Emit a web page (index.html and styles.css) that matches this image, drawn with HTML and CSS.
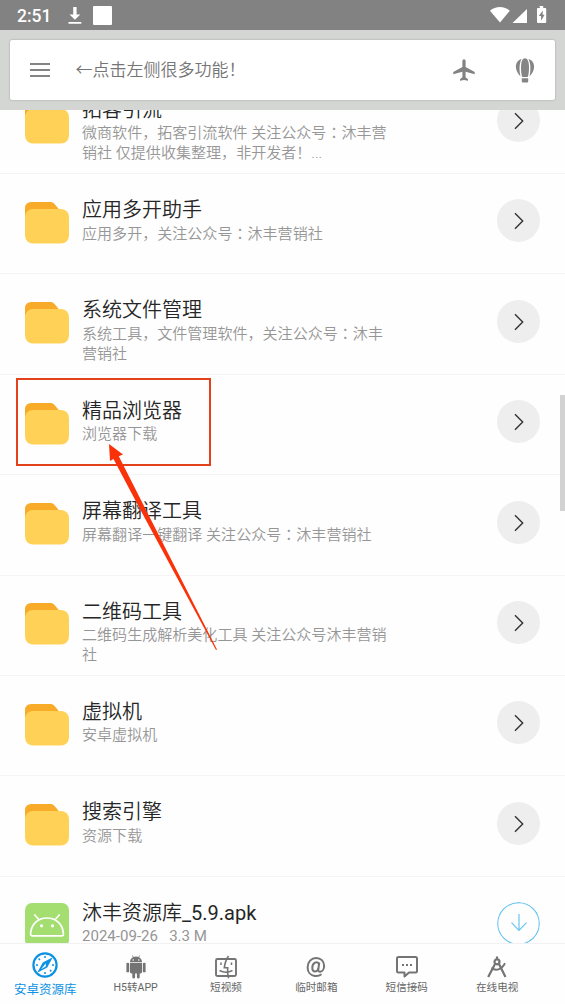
FILE: index.html
```
<!DOCTYPE html>
<html lang="zh-CN">
<head>
<meta charset="utf-8">
<title>安卓资源库</title>
<link rel="stylesheet" href="styles.css">
</head>
<body>
<svg class="defs" width="0" height="0" aria-hidden="true">
  <symbol id="folder" viewBox="0 0 44 44">
    <path fill="#f8ab28" d="M0 24V8.500Q0 2 6.500 2H26Q28 2 29.300 3.800L35 10.500V24Z"/>
    <rect y="9" width="44" height="34.500" rx="8" fill="#ffd257"/>
  </symbol>
  <symbol id="chevron" viewBox="0 0 43 43">
    <path d="M18 14.200L25.700 22L18 29.800" fill="none" stroke="#333" stroke-width="1.400"/>
  </symbol>
</svg>
<div class="screen">
  <header class="top">
    <div class="status">
      <span class="clock">2:51</span>
      <svg class="status-left" width="44" height="20" viewBox="0 0 44 20" fill="#fff">
        <path d="M5.200 1h3.400v7.400h3.700L6.900 13.800 1.500 8.400h3.700zM.5 16h12.800v1.800H.5z"/>
        <rect x="25" width="19" height="19" rx="1"/>
      </svg>
      <svg class="status-right" width="58" height="19" viewBox="0 0 58 19" fill="#fff">
        <path d="M0 4.700C5.600-.3 14.200-.3 19.800 4.700L10 16.600Z"/>
        <path d="M22.500 17L37 3V17Z"/>
        <path d="M49.200 0h4v2h2q1 0 1 1v13q0 1-1 1h-7.200q-1 0-1-1V3q0-1 1-1h2.200z"/>
        <path d="M52.800 4.500L48.800 10h2.300v4.800L54.600 8.700h-2z" fill="#828282"/>
      </svg>
    </div>
    <div class="toolbar">
      <svg class="menu" width="20" height="14" viewBox="0 0 20 14" fill="#848484"><path d="M0 0h20v2H0zM0 6h20v2H0zM0 12h20v2H0z"/></svg>
      <div class="hint">←点击左侧很多功能！</div>
      <svg class="plane" width="22" height="22" viewBox="0 0 22 22" fill="#828282">
        <path d="M9.400 2Q9.400.2 11 .2T12.600 2V7.900L21.700 13V15.200L12.600 12.700V18.300L15 20.200V21.800L11 20.900 7 21.800V20.200L9.400 18.300V12.700L.3 15.200V13L9.400 7.900Z"/>
      </svg>
      <svg class="balloon" width="20" height="25" viewBox="0 0 20 25" fill="#858585">
        <path d="M10 .2C12.800.2 14 4 14 9.800 14 14 13.300 18.800 12.500 19H7.500C6.700 18.800 6 14 6 9.800 6 4 7.200.2 10 .2Z"/>
        <path d="M6.500.9C2.500 2 .8 5.500.9 9c.1 3.700 2.300 7 4.600 9.400C4.300 13 3.900 6 6.500.9ZM13.500.9C17.500 2 19.200 5.500 19.100 9c-.1 3.700-2.300 7-4.600 9.400C15.700 13 16.100 6 13.500.9Z"/>
        <path d="M6.800 20.300h6.400v3.200q0 1-1 1H7.800q-1 0-1-1z"/>
      </svg>
    </div>
  </header>

  <main class="list">
    <div class="rows">
      <div class="row">
        <svg class="thumb"><use href="#folder"/></svg>
        <div class="info"><div class="title">拓客引流</div><div class="desc">微商软件，拓客引流软件 关注公众号<span class="colon" lang="zh-TW">：</span>沐丰营<br>销社 仅提供收集整理，非开发者！...</div></div>
        <svg class="go"><use href="#chevron"/></svg>
      </div>
      <div class="row">
        <svg class="thumb"><use href="#folder"/></svg>
        <div class="info"><div class="title">应用多开助手</div><div class="desc">应用多开，关注公众号<span class="colon" lang="zh-TW">：</span>沐丰营销社</div></div>
        <svg class="go"><use href="#chevron"/></svg>
      </div>
      <div class="row">
        <svg class="thumb"><use href="#folder"/></svg>
        <div class="info"><div class="title">系统文件管理</div><div class="desc">系统工具，文件管理软件，关注公众号<span class="colon" lang="zh-TW">：</span>沐丰<br>营销社</div></div>
        <svg class="go"><use href="#chevron"/></svg>
      </div>
      <div class="row">
        <svg class="thumb"><use href="#folder"/></svg>
        <div class="info"><div class="title">精品浏览器</div><div class="desc">浏览器下载</div></div>
        <svg class="go"><use href="#chevron"/></svg>
      </div>
      <div class="row">
        <svg class="thumb"><use href="#folder"/></svg>
        <div class="info"><div class="title">屏幕翻译工具</div><div class="desc">屏幕翻译一键翻译 关注公众号<span class="colon" lang="zh-TW">：</span>沐丰营销社</div></div>
        <svg class="go"><use href="#chevron"/></svg>
      </div>
      <div class="row">
        <svg class="thumb"><use href="#folder"/></svg>
        <div class="info"><div class="title">二维码工具</div><div class="desc">二维码生成解析美化工具 关注公众号沐丰营销<br>社</div></div>
        <svg class="go"><use href="#chevron"/></svg>
      </div>
      <div class="row">
        <svg class="thumb"><use href="#folder"/></svg>
        <div class="info"><div class="title">虚拟机</div><div class="desc">安卓虚拟机</div></div>
        <svg class="go"><use href="#chevron"/></svg>
      </div>
      <div class="row">
        <svg class="thumb"><use href="#folder"/></svg>
        <div class="info"><div class="title">搜索引擎</div><div class="desc">资源下载</div></div>
        <svg class="go"><use href="#chevron"/></svg>
      </div>
      <div class="row">
        <svg class="thumb" viewBox="0 0 44 44">
          <rect width="44" height="44" rx="7" fill="#a4de70"/>
          <g fill="none" stroke="#fff" stroke-width="1.700" stroke-linecap="round" stroke-linejoin="round">
            <path d="M7.500 32.900Q5.300 32.900 5.600 30.300C6.500 21 13 15 22 15s15.500 6 16.400 15.300q.3 2.600-1.900 2.600ZM14 16.800L9.800 12M30 16.800L34.200 12"/>
          </g>
          <circle cx="16.500" cy="22.800" r="1.600" fill="#fff"/><circle cx="27.500" cy="22.800" r="1.600" fill="#fff"/>
        </svg>
        <div class="info"><div class="title">沐丰资源库<span class="latin">_5.9.apk</span></div><div class="desc date">2024-09-26 &nbsp; 3.3 M</div></div>
        <svg class="go download" viewBox="0 0 43 43"><g fill="none" stroke="#6cc5ef" stroke-width="1.200"><circle cx="21.500" cy="21.500" r="20.800"/><path d="M22 12V28.500M14.500 20.700L22 28.500L29.500 20.700"/></g></svg>
      </div>
    </div>
  </main>

  <nav class="tabs">
    <div class="tab active">
      <svg width="26" height="26" viewBox="0 0 26 26">
        <circle cx="13" cy="13" r="11.600" fill="none" stroke="#0b92e4" stroke-width="2.200"/>
        <path d="M13 4v2M13 20v2M4 13h2M20 13h2M6.600 6.600l1.400 1.400M18 18l1.400 1.400" stroke="#0b92e4" stroke-width="1.500"/>
        <path fill="#0b92e4" fill-rule="evenodd" d="M20.800 5.200L15.200 15.400 5.200 20.800 10.800 10.500ZM13.800 11.200L11.300 14.400 9 17.300 13.800 14.600Z"/>
      </svg>
      <span>安卓资源库</span>
    </div>
    <div class="tab">
      <svg width="22" height="26" viewBox="0 0 22 26" fill="#747474">
        <path fill-rule="evenodd" d="M4.500 7.600C4.600 5 6.100 3.300 7.800 2.500L6.700.5l.6-.3 1.200 2Q11 1.300 13.500 2.200L14.700.2l.6.3-1.100 2c1.700.8 3.200 2.500 3.300 5.100ZM8 4.500a.8.8 0 1 0 0 1.600.8.800 0 0 0 0-1.600ZM14 4.500a.8.800 0 1 0 0 1.600.8.800 0 0 0 0-1.600Z"/>
        <path d="M4.500 8.500h13v10q0 1.500-1.500 1.500h-1v4q0 1.500-1.500 1.500T12 24v-4h-2v4q0 1.500-1.500 1.500T7 24v-4H6q-1.500 0-1.500-1.500z"/>
        <rect x=".6" y="8.300" width="3" height="10.500" rx="1.300"/><rect x="18.400" y="8.300" width="3" height="10.500" rx="1.300"/>
      </svg>
      <span>H5转APP</span>
    </div>
    <div class="tab">
      <svg width="22" height="24" viewBox="0 0 22 24" fill="none" stroke="#747474" stroke-width="1.900">
        <rect x="1" y="4" width="20" height="17" rx="1.500"/>
        <path d="M13.500 1C10.500 5 9.800 9 9.300 12.700H12.700C12.300 16.500 12.400 20 13.600 23.300" stroke-width="1.600"/>
        <path d="M6 7.500V10M16.500 7.500V10M4.500 15.500Q11 18.800 17.500 15.500" stroke-width="1.500"/>
      </svg>
      <span>短视频</span>
    </div>
    <div class="tab">
      <svg width="20" height="24" viewBox="0 0 20 24" fill="none" stroke="#747474" stroke-width="2">
        <path d="M15.500 19.200C13.500 20.700 11 21.200 8.800 20.900 4.600 20.400 1.600 17 1.600 12.400 1.600 7 5.300 2.900 10.200 2.900c4.700 0 7.900 3.300 7.900 7.900 0 3.500-1.700 5.900-3.900 5.900-1.700 0-2.100-1.100-1.900-2.600L13.300 7.500"/>
        <path d="M12.900 9C12 7.300 10.400 7 9 7.700 7.300 8.600 6.300 10.600 6.300 12.800c0 2.300 1.100 3.700 2.700 3.700 1.500 0 2.800-1.200 3.400-3"/>
      </svg>
      <span>临时邮箱</span>
    </div>
    <div class="tab">
      <svg width="22" height="24" viewBox="0 0 22 24" fill="none" stroke="#747474" stroke-width="2">
        <path d="M2.500 2H19.500Q21 2 21 3.500V16Q21 17.500 19.500 17.500H13L8.500 21.500V17.500H2.500Q1 17.500 1 16V3.500Q1 2 2.500 2Z" stroke-linejoin="round"/>
        <path d="M6 10h2M10 10h2M14 10h2"/>
      </svg>
      <span>短信接码</span>
    </div>
    <div class="tab">
      <svg width="20" height="24" viewBox="0 0 20 24" fill="none" stroke="#747474" stroke-width="2.200">
        <path d="M10 1.500V4M8 9L1.200 22M12 9L18.500 22"/>
        <circle cx="10" cy="6.800" r="2.500"/>
        <path d="M4.600 12.500Q7.500 15.700 11.500 14.300T18 8.200" stroke-width="1.900"/>
      </svg>
      <span>在线电视</span>
    </div>
  </nav>

  <div class="scrollbar"></div>
  <svg class="callout" width="565" height="1004" viewBox="0 0 565 1004">
    <rect x="17" y="379" width="193" height="86" fill="none" stroke="#e3401c" stroke-width="2"/>
    <path d="M109 444L123 454.500 118.800 456.300 145 508 217 649.500 216 650 141 511 113.500 459 110 461Z" fill="#fa3209"/>
  </svg>
</div>
</body>
</html>
```
FILE: styles.css
```
* { box-sizing: border-box; }
body { margin: 0; font-family: Roboto, "Noto Sans CJK SC", sans-serif; background: #fefefe; }
svg { display: block; flex: none; }
.defs { position: absolute; }
.screen { position: relative; width: 565px; height: 1004px; overflow: hidden; display: flex; flex-direction: column; }

.top { height: 110px; flex: none; background: #d4d6d3; }
.status { height: 30px; background: #828282; display: flex; align-items: flex-start; padding: 0 17px; color: #fff; }
.clock { width: 51px; font-size: 17.500px; line-height: 32px; font-weight: 500; }
.status-left { margin-top: 6px; }
.status-right { margin: 6px 0 0 auto; }
.toolbar { height: 60px; margin: 10px 10px 0; padding: 0 20px; background: #fff; border-radius: 2px; box-shadow: 0 0 2px rgba(0,0,0,.3); display: flex; align-items: center; }
.hint { flex: 1; margin-left: 25.500px; padding-bottom: 2px; font: 350 17px/24px "Noto Sans CJK SC DemiLight", "Noto Sans CJK SC", sans-serif; color: #757575; }
.plane { margin-right: 40px; }

.list { flex: 1; min-height: 0; overflow: hidden; }
.rows { margin-top: -36.400px; }
.row { height: 100.400px; padding: 25.400px 25px 0; border-bottom: 1px solid #f4f4f4; display: flex; align-items: flex-start; }
.thumb { width: 44px; height: 44px; margin-top: .5px; overflow: visible; }
.info { flex: 1; min-width: 0; margin-left: 13px; margin-top: -3.400px; white-space: nowrap; }
.title { font-family: Roboto, "Noto Sans CJK SC DemiLight", "Noto Sans CJK SC", sans-serif; font-size: 20px; font-weight: 350; line-height: 28px; color: #262626; }
.latin { font-weight: 400; }
.desc { margin-top: -.5px; font-family: Roboto, "Noto Sans CJK SC DemiLight", "Noto Sans CJK SC", sans-serif; font-size: 15.060px; line-height: 20px; color: #969696; font-weight: 350; }
.date { font-weight: 400; }
.colon { font-family: "Noto Sans CJK TC", sans-serif; line-height: 1; }
.go { width: 43px; height: 43px; border-radius: 50%; background: #eee; }
.download { background: none; }

.tabs { height: 61px; flex: none; border-top: 1px solid #f1f1f1; background: #fefefe; display: flex; }
.tab { width: 90.400px; display: flex; flex-direction: column; align-items: center; padding-top: 10.500px; font-size: 10.600px; line-height: 16px; color: #666; white-space: nowrap; }
.tab svg { height: 24px; margin-bottom: 1px; }
.tab.active { padding-top: 8px; font-size: 12.500px; line-height: 18px; color: #0b92e4; }
.tab.active svg { height: 26px; margin-bottom: 3px; }

.scrollbar { position: absolute; right: 0; top: 395px; width: 5px; height: 116px; background: #d2d2d2; }
.callout { position: absolute; left: 0; top: 0; pointer-events: none; }
```
